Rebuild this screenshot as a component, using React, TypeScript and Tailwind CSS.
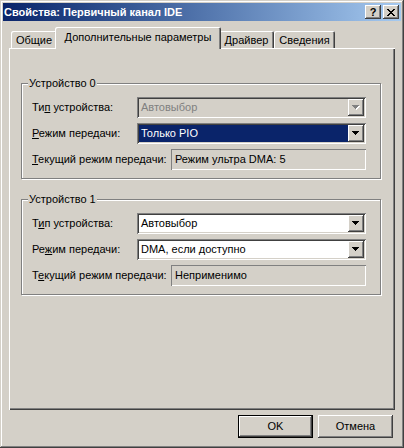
import React from 'react';

const face = 'bg-[#d4d0c8]';
const raised =
  'shadow-[inset_-1px_-1px_0_#404040,inset_1px_1px_0_#ffffff,inset_-2px_-2px_0_#808080]';
const sunken =
  'shadow-[inset_1px_1px_0_#808080,inset_-1px_-1px_0_#ffffff,inset_2px_2px_0_#404040,inset_-2px_-2px_0_#d4d0c8]';

const Arrow = ({ disabled = false }: { disabled?: boolean }) => (
  <svg width="8" height="5" viewBox="0 0 8 5" shapeRendering="crispEdges">
    {disabled && (
      <path d="M1 1h7v1h-1v1h-1v1h-1v1h-1v-1h-1v-1h-1v-1h-1z" fill="#ffffff" />
    )}
    <path
      d="M0 0h7v1h-1v1h-1v1h-1v1h-1v-1h-1v-1h-1v-1h-1z"
      fill={disabled ? '#808080' : '#000000'}
    />
  </svg>
);

type ComboProps = {
  value: string;
  disabled?: boolean;
  selected?: boolean;
};

const Combo: React.FC<ComboProps> = ({ value, disabled, selected }) => (
  <div
    className={`flex h-[21px] w-[229px] p-[2px] ${sunken} ${
      disabled ? face : 'bg-white'
    }`}
  >
    <div
      className={`flex flex-1 items-center pl-[2px] ${
        selected
          ? 'bg-[#0a246a] text-white'
          : disabled
            ? 'text-[#808080]'
            : 'text-black'
      }`}
    >
      {value}
    </div>
    <div className={`flex w-[16px] items-center justify-center ${face} ${raised}`}>
      <Arrow disabled={disabled} />
    </div>
  </div>
);

const Static = ({ value }: { value: string }) => (
  <div className="flex h-[21px] w-[195px] items-center pl-[4px] shadow-[inset_1px_1px_0_#808080,inset_-1px_-1px_0_#ffffff]">
    {value}
  </div>
);

// label with the accelerator letter underlined
const Label = ({ text, at, width }: { text: string; at: number; width: string }) => (
  <span className={`shrink-0 ${width}`}>
    {text.slice(0, at)}
    <u>{text[at]}</u>
    {text.slice(at + 1)}
  </span>
);

type Device = {
  title: string;
  type: string;
  mode: string;
  current: string;
  keys: number[];
  disabledType?: boolean;
  selectedMode?: boolean;
};

const devices: Device[] = [
  {
    title: 'Устройство 0',
    type: 'Автовыбор',
    mode: 'Только PIO',
    current: 'Режим ультра DMA: 5',
    keys: [2, 0, 0],
    disabledType: true,
    selectedMode: true,
  },
  {
    title: 'Устройство 1',
    type: 'Автовыбор',
    mode: 'DMA, если доступно',
    current: 'Неприменимо',
    keys: [1, 2, 1],
  },
];

const GroupBox = ({ device }: { device: Device }) => (
  <div className="relative ml-[12px] mr-[14px] border border-[#808080] pt-[13px] pb-[8px] pl-[10px] shadow-[inset_1px_1px_0_#ffffff,1px_1px_0_#ffffff]">
    <span className={`absolute left-[6px] top-[-7px] px-[1px] leading-[12px] ${face}`}>
      {device.title}
    </span>
    <div className="flex flex-col gap-[5px]">
      <div className="flex h-[21px] items-center">
        <Label text="Тип устройства:" at={device.keys[0]} width="w-[105px]" />
        <Combo value={device.type} disabled={device.disabledType} />
      </div>
      <div className="flex h-[21px] items-center">
        <Label text="Режим передачи:" at={device.keys[1]} width="w-[105px]" />
        <Combo value={device.mode} selected={device.selectedMode} />
      </div>
      <div className="flex h-[21px] items-center">
        <Label text="Текущий режим передачи:" at={device.keys[2]} width="w-[139px]" />
        <Static value={device.current} />
      </div>
    </div>
  </div>
);

const tabs = [
  { name: 'Общие', w: 'w-[46px]' },
  { name: 'Дополнительные параметры', w: 'w-[166px]', active: true },
  { name: 'Драйвер', w: 'w-[55px]' },
  { name: 'Сведения', w: 'w-[61px]' },
];

export default function App() {
  return (
    <div
      className={`flex h-[448px] w-[404px] flex-col p-[3px] text-[11px] leading-none text-black font-['Liberation_Sans',Arial,sans-serif] ${face} shadow-[inset_-1px_-1px_0_#404040,inset_1px_1px_0_#d4d0c8,inset_-2px_-2px_0_#808080,inset_2px_2px_0_#ffffff]`}
    >
      {/* title bar */}
      <div className="flex h-[18px] shrink-0 items-center bg-gradient-to-r from-[#0a246a] to-[#a6caf0] pl-[1px] pr-[2px]">
        <span className="flex-1 text-[11px] font-bold text-white">
          Свойства: Первичный канал IDE
        </span>
        <div className="flex gap-[2px]">
          <div className={`flex h-[14px] w-[16px] items-center justify-center text-[11px] font-bold ${face} ${raised}`}>
            ?
          </div>
          <div className={`flex h-[14px] w-[16px] items-center justify-center ${face} ${raised}`}>
            <svg width="8" height="7" viewBox="0 0 8 7" shapeRendering="crispEdges">
              <path
                d="M0 0h2v1h1v1h2v-1h1v-1h2v1h-1v1h-1v1h-1v1h1v1h1v1h1v1h-2v-1h-1v-1h-2v1h-1v1h-2v-1h1v-1h1v-1h1v-1h-1v-1h-1v-1h-1z"
                fill="#000000"
              />
            </svg>
          </div>
        </div>
      </div>

      {/* property sheet */}
      <div className="mx-[6px] mt-[6px] flex flex-1 flex-col">
        <div className="relative z-10 flex h-[21px] items-end pl-[2px]">
          {tabs.map(tab => (
            <div
              key={tab.name}
              className={`flex shrink-0 justify-center rounded-t-[2px] ${face} ${tab.w} shadow-[inset_1px_1px_0_#ffffff,inset_-1px_0_0_#404040,inset_-2px_0_0_#808080] ${
                tab.active
                  ? 'relative z-10 -mx-[2px] mb-[-1px] h-[22px] pt-[5px]'
                  : 'h-[17px] pt-[4px]'
              }`}
            >
              {tab.name}
            </div>
          ))}
        </div>
        <div className="flex h-[362px] flex-col shadow-[inset_1px_1px_0_#ffffff,inset_-1px_-1px_0_#404040,inset_-2px_-2px_0_#808080]">
          <div className="mt-[35px]">
            <GroupBox device={devices[0]} />
          </div>
          <div className="mt-[20px]">
            <GroupBox device={devices[1]} />
          </div>
        </div>
        <div className="mt-[5px] flex justify-end gap-[5px] pr-[2px]">
          <div className={`flex h-[23px] w-[75px] items-center justify-center border border-black ${face} ${raised}`}>
            OK
          </div>
          <div className={`flex h-[23px] w-[75px] items-center justify-center ${face} ${raised}`}>
            Отмена
          </div>
        </div>
      </div>
    </div>
  );
}
